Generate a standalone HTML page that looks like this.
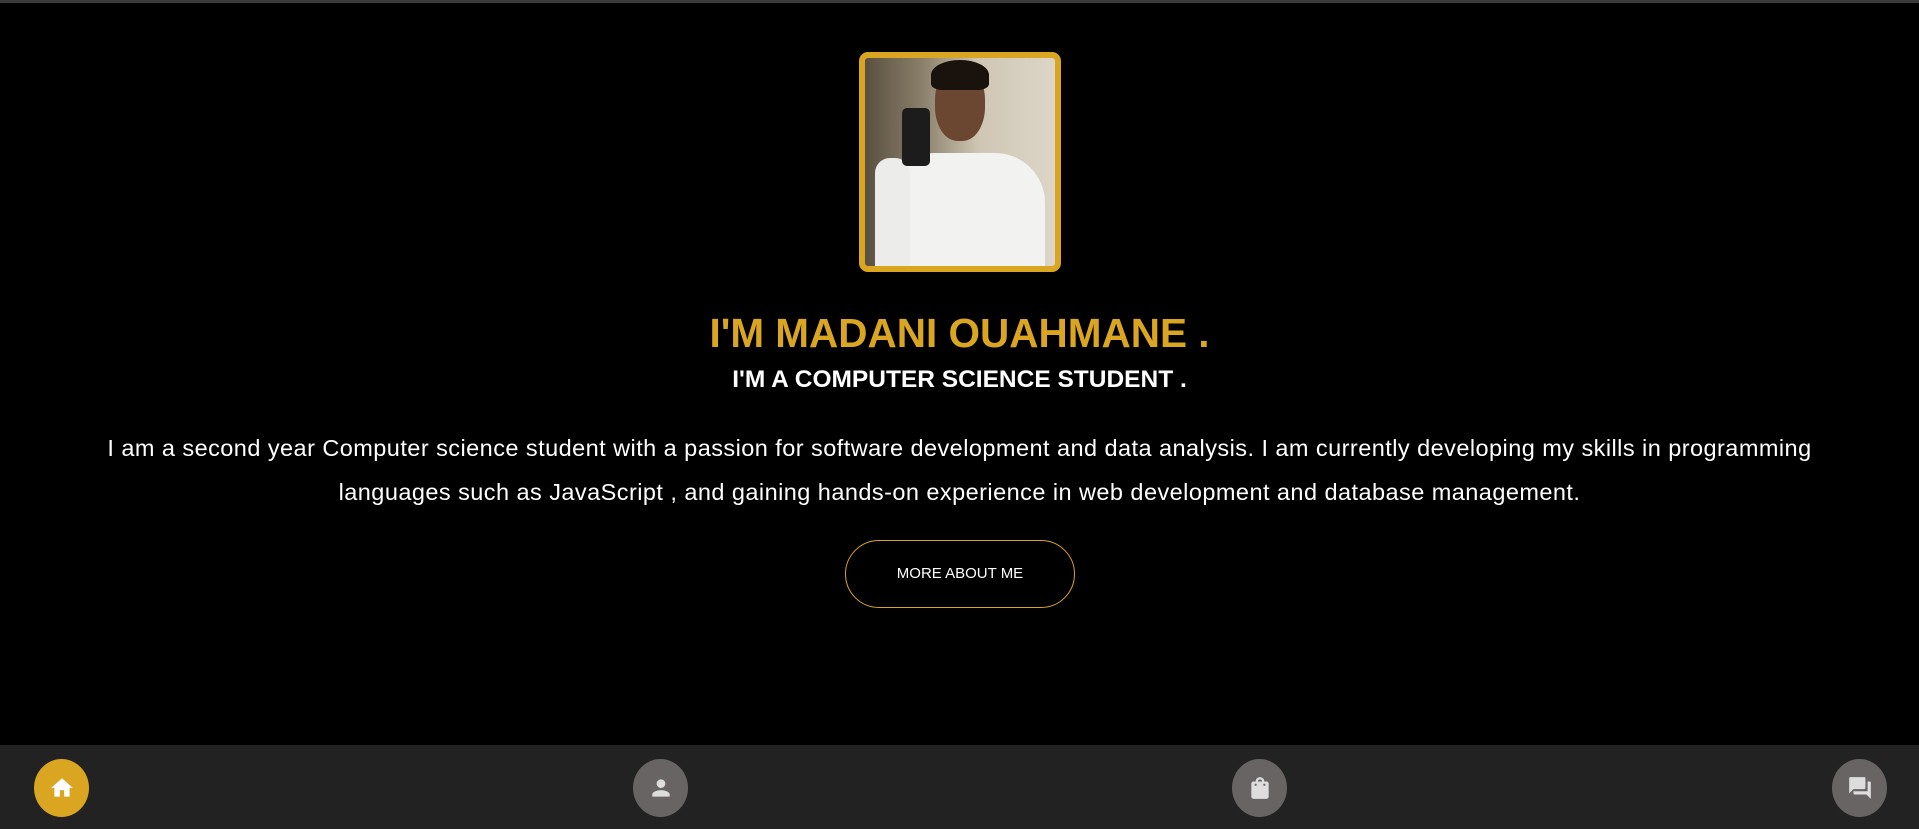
<!DOCTYPE html>
<html><head><meta charset="utf-8"><style>
*{margin:0;padding:0;box-sizing:border-box}
html,body{width:1919px;height:829px;overflow:hidden;background:#000;font-family:"Liberation Sans",sans-serif;color:#fff}
.topline{position:absolute;left:0;top:0;width:1919px;height:3px;background:#3a3a3a}
.photo{position:absolute;left:859px;top:52px;width:202px;height:220px;border:6px solid #DAA520;border-radius:9px;overflow:hidden;background:linear-gradient(90deg,#5a5040 0%,#8a7f6a 30%,#cfc6b4 60%,#ddd6c8 100%)}
.photo .shirt{position:absolute;left:20px;top:95px;width:160px;height:140px;background:#f2f2f0;border-radius:50px 50px 0 0}
.photo .head{position:absolute;left:70px;top:8px;width:50px;height:75px;background:#6b4630;border-radius:45%}
.photo .hair{position:absolute;left:66px;top:2px;width:58px;height:30px;background:#1a120c;border-radius:50% 50% 20% 20%}
.photo .phone{position:absolute;left:37px;top:50px;width:28px;height:58px;background:#1c1c1c;border-radius:5px}
.photo .arm{position:absolute;left:10px;top:100px;width:35px;height:125px;background:#ececea;border-radius:15px}
h1{position:absolute;left:0;width:1919px;top:310px;text-align:center;color:#DAA520;font-size:40.5px;font-weight:bold}
h2{position:absolute;left:0;width:1919px;top:366px;text-align:center;color:#fff;font-size:24.5px;font-weight:bold}
p{position:absolute;left:0;width:1919px;top:426px;text-align:center;font-size:23.5px;line-height:44px;letter-spacing:.45px;white-space:nowrap}
.btn{position:absolute;left:845px;top:540px;width:230px;height:68px;border:1px solid #DAA520;border-radius:34px;text-align:center;line-height:66px;font-size:15px;color:#fff}
.bar{position:absolute;left:0;top:745px;width:1919px;height:84px;background:#222}
.c{position:absolute;top:759px;width:55px;height:58px;border-radius:50%;background:#686464;display:flex;align-items:center;justify-content:center}
</style></head><body>
<div class="topline"></div>
<div class="photo"><div class="shirt"></div><div class="arm"></div><div class="head"></div><div class="hair"></div><div class="phone"></div></div>
<h1>I'M MADANI OUAHMANE .</h1>
<h2>I'M A COMPUTER SCIENCE STUDENT .</h2>
<p>I am a second year Computer science student with a passion for software development and data analysis. I am currently developing my skills in programming<br>languages such as JavaScript , and gaining hands-on experience in web development and database management.</p>
<div class="btn">MORE ABOUT ME</div>
<div class="bar"></div>
<div class="c" style="left:34px;background:#DAA520"><svg width="26" height="26" viewBox="0 0 24 24"><path d="M10 20v-6h4v6h5v-8h3L12 3 2 12h3v8z" fill="#fff"/></svg></div>
<div class="c" style="left:633px"><svg width="26" height="26" viewBox="0 0 24 24"><path d="M12 12c2.2 0 4-1.8 4-4s-1.8-4-4-4-4 1.8-4 4 1.8 4 4 4zm0 2c-2.7 0-8 1.3-8 4v2h16v-2c0-2.7-5.3-4-8-4z" fill="#ddd"/></svg></div>
<div class="c" style="left:1232px"><svg width="26" height="26" viewBox="0 0 24 24"><path d="M18 6h-2c0-2.2-1.8-4-4-4S8 3.8 8 6H6c-1.1 0-2 .9-2 2v12c0 1.1.9 2 2 2h12c1.1 0 2-.9 2-2V8c0-1.1-.9-2-2-2zm-6-2c1.1 0 2 .9 2 2h-4c0-1.1.9-2 2-2zm-4 6c-.6 0-1-.4-1-1s.4-1 1-1 1 .4 1 1-.4 1-1 1zm8 0c-.6 0-1-.4-1-1s.4-1 1-1 1 .4 1 1-.4 1-1 1z" fill="#ddd"/></svg></div>
<div class="c" style="left:1832px"><svg width="26" height="26" viewBox="0 0 24 24"><path d="M21 6h-2v9H6v2c0 .6.4 1 1 1h11l4 4V7c0-.6-.4-1-1-1zm-4 6V3c0-.6-.4-1-1-1H3c-.6 0-1 .4-1 1v14l4-4h10c.6 0 1-.4 1-1z" fill="#ddd"/></svg></div>
</body></html>
